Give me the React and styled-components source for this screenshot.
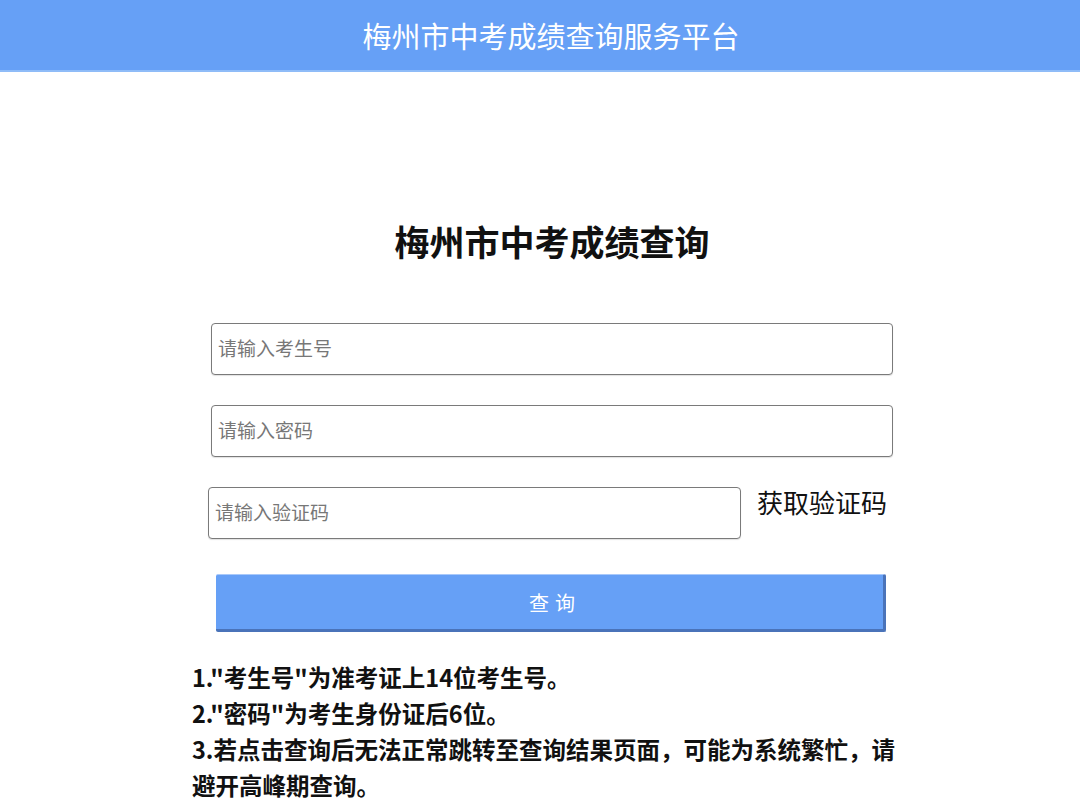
import React from 'react';
import styled, { createGlobalStyle } from 'styled-components';

const GlobalStyle = createGlobalStyle`
    body {
        margin: 0;
        background: #ffffff;
        font-family: "Noto Sans CJK SC", "Noto Sans", sans-serif;
    }
`;

const Header = styled.header`
    height: 70px;
    background: #66a0f6;
    border-bottom: 2px solid #8fbcf8;
    display: flex;
    align-items: center;
    justify-content: center;
    padding-left: 22px;
    color: #ffffff;
    font-size: 29px;
    font-weight: 400;
`;

const Main = styled.main`
    width: 720px;
    margin-left: 192px;
    padding-top: 144px;
`;

const Title = styled.h1`
    margin: 0;
    height: 50px;
    line-height: 50px;
    text-align: center;
    font-size: 35px;
    font-weight: 700;
    color: #111111;
`;

const Form = styled.div`
    display: flex;
    flex-direction: column;
    gap: 30px;
    margin-top: 57px;
`;

const Row = styled.div`
    display: flex;
    align-items: flex-start;
    gap: 16px;
    margin-left: ${p => p.$offset}px;
`;

const Input = styled.input`
    box-sizing: border-box;
    width: ${p => p.$width}px;
    height: 52px;
    border: 1.5px solid #7a7a7a;
    border-radius: 4px;
    padding: 0 6px 3px;
    font-family: inherit;
    font-size: 19px;
    color: #333;
    outline: none;
    box-shadow: 0 1px 1px rgba(0, 0, 0, 0.12);
    &::placeholder {
        color: #777777;
    }
`;

const CodeLink = styled.span`
    font-size: 26px;
    line-height: 30px;
    color: #111111;
    white-space: nowrap;
`;

const Submit = styled.button`
    box-sizing: border-box;
    display: block;
    width: 670px;
    height: 58px;
    margin: 35px 0 0 24px;
    padding: 0 6px 0 17px;
    background: #66a0f6;
    border: none;
    border-top: 1px solid #a9c9fa;
    border-right: 3px solid #4a73b9;
    border-bottom: 3px solid #4a73b9;
    border-radius: 2px;
    color: #ffffff;
    font-family: inherit;
    font-size: 20px;
    letter-spacing: 6px;
`;

const Notes = styled.ol`
    list-style: none;
    margin: 27px 0 0;
    padding: 0;
    width: 705px;
    font-size: 23.5px;
    font-weight: 700;
    line-height: 36px;
    color: #111111;
`;

const Note = styled.li``;

export default function App() {
    return (
        <>
            <GlobalStyle />
            <Header>梅州市中考成绩查询服务平台</Header>
            <Main>
                <Title>梅州市中考成绩查询</Title>
                <Form>
                    <Row $offset={19}>
                        <Input $width={682} placeholder="请输入考生号" />
                    </Row>
                    <Row $offset={19}>
                        <Input $width={682} placeholder="请输入密码" />
                    </Row>
                    <Row $offset={16}>
                        <Input $width={533} placeholder="请输入验证码" />
                        <CodeLink>获取验证码</CodeLink>
                    </Row>
                </Form>
                <Submit>查询</Submit>
                <Notes>
                    <Note>1."考生号"为准考证上14位考生号。</Note>
                    <Note>2."密码"为考生身份证后6位。</Note>
                    <Note>3.若点击查询后无法正常跳转至查询结果页面，可能为系统繁忙，请避开高峰期查询。</Note>
                </Notes>
            </Main>
        </>
    );
}
